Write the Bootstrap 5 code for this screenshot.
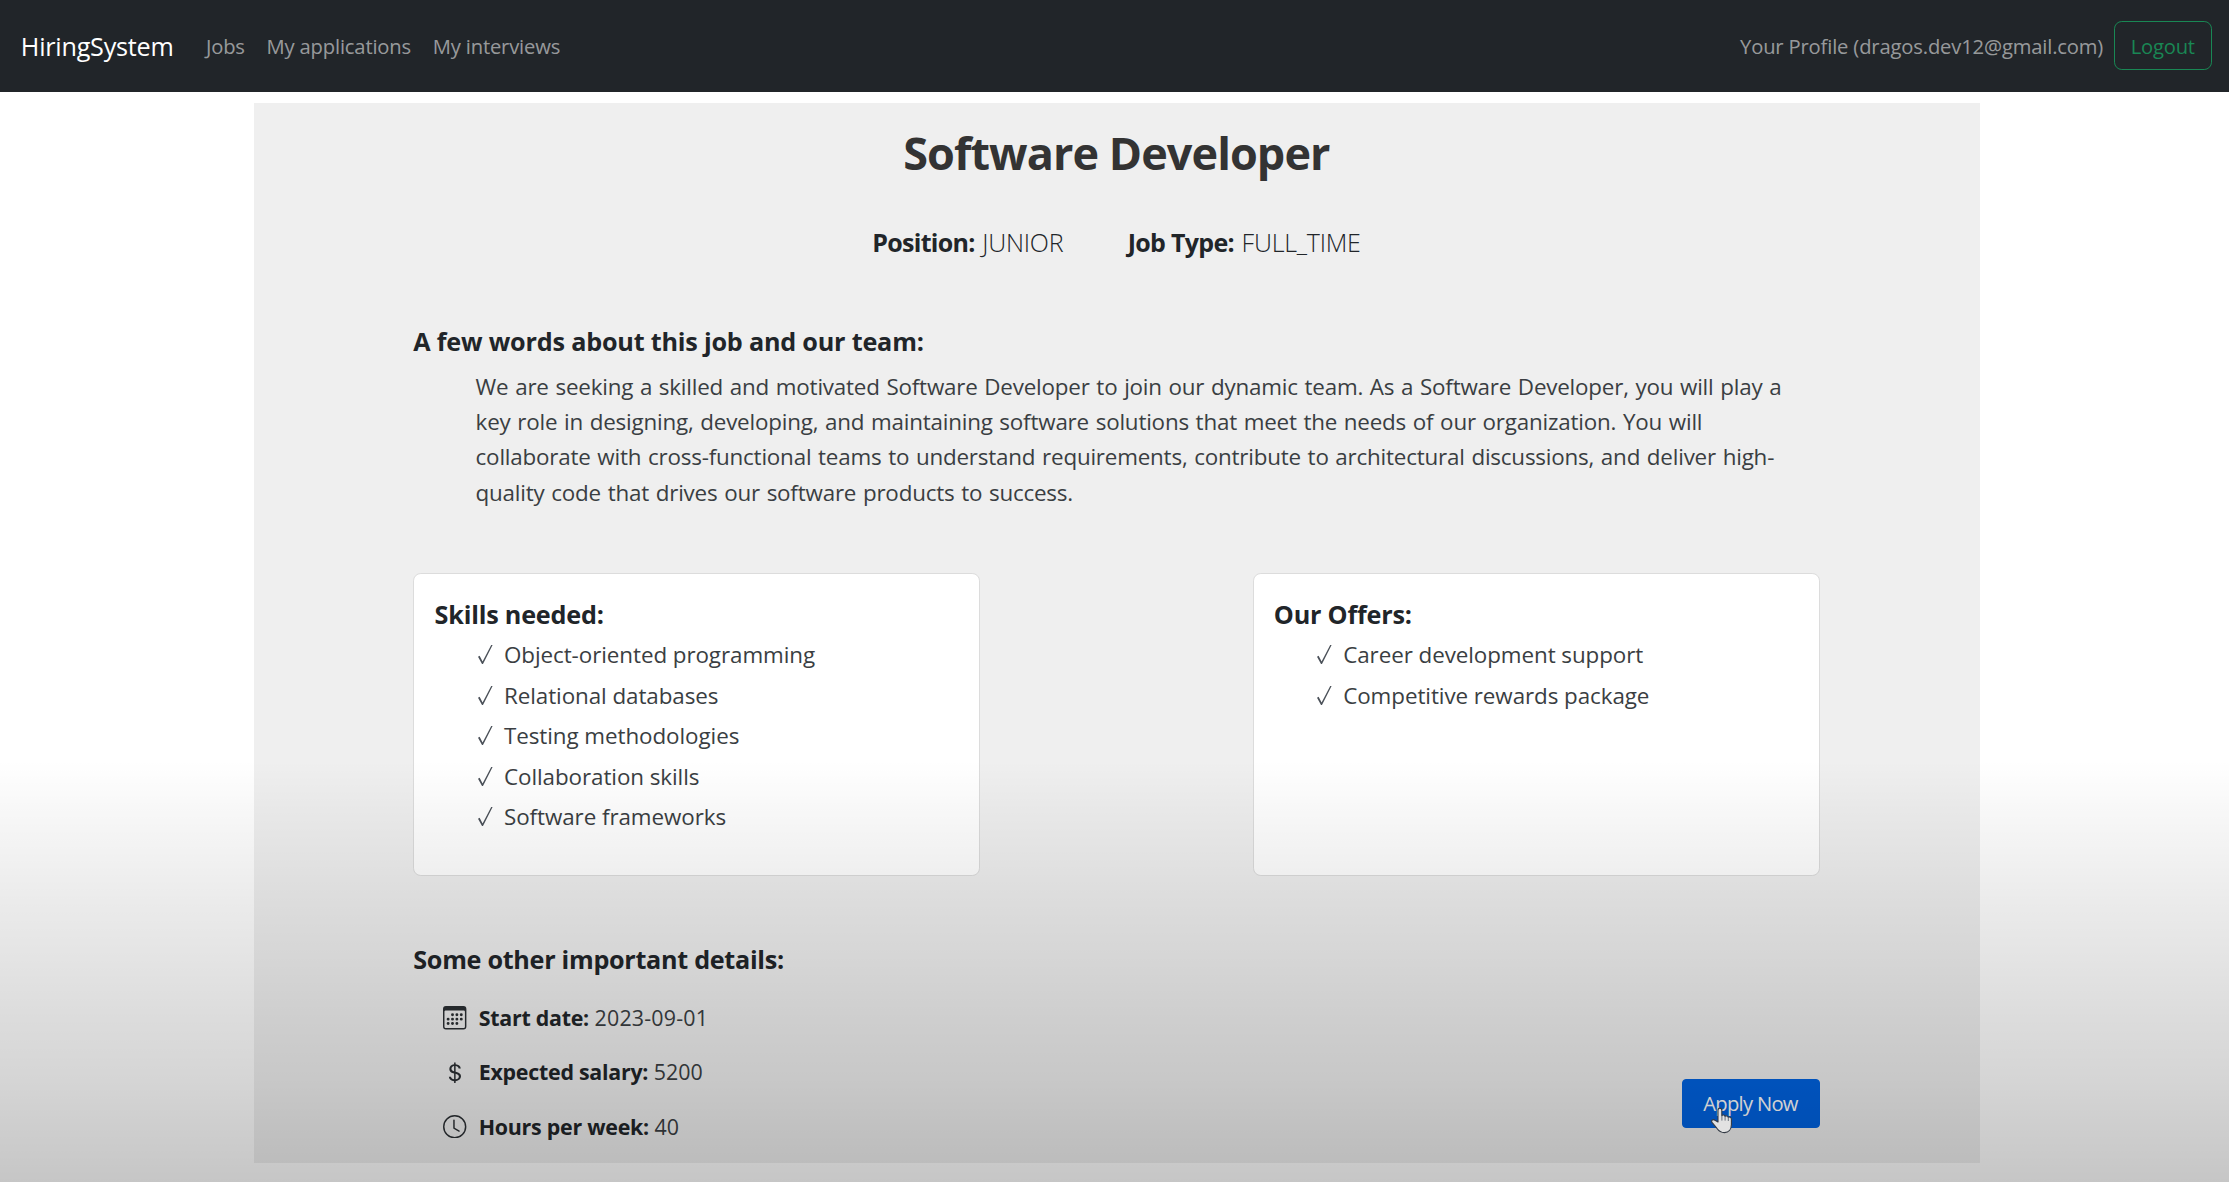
<!DOCTYPE html>
<html lang="en">
<head>
<meta charset="utf-8">
<title>HiringSystem</title>
<link href="https://cdn.jsdelivr.net/npm/bootstrap@5.3.0/dist/css/bootstrap.min.css" rel="stylesheet">
<style>
html{font-size:20.8px}
body{font-family:"Open Sans","Noto Sans",sans-serif;font-size:20.2px;color:#212529;background:#fff;height:1182px;overflow:hidden;position:relative}
.top-bar{height:91.5px;background:#212529}
.top-bar .container-fluid{padding:0 17px 0 20.8px}
.top-bar .navbar-brand{font-size:25.2px;letter-spacing:-.24px;margin-right:22px;padding-top:8px}
.top-bar .nav-link{letter-spacing:-.16px}
.main-links{gap:.9px}
.logout-btn{width:98.5px;height:49.4px;font-size:20.2px;line-height:32.5px;letter-spacing:-.2px;border-radius:7.8px}
.job-panel{width:1726px;margin:11px auto 0 254px;height:1060px;background:#efefef;padding:22px 160.5px 0 159.3px}
.job-title{font-size:45px;font-weight:700;color:#333;line-height:56px;letter-spacing:-.94px}
.job-meta{font-size:25px;gap:64.5px;line-height:38px;margin-top:42.5px;font-weight:300;letter-spacing:-.25px}
.job-meta b{font-weight:700;letter-spacing:-.7px;margin-right:1.4px}
.sect-title{font-size:25.2px;font-weight:700;line-height:31px;margin:0;letter-spacing:-.2px}
.about-title{margin-top:64.7px}
.about-text{font-size:22.4px;line-height:35.3px;padding-left:62.3px;margin:12px 0 0;color:#3a3e42;white-space:nowrap;letter-spacing:-.2px;word-spacing:1.1px}
.card-row{margin-top:63.4px}
.info-card{width:567px;height:302.5px;border:1px solid #dcdcdc;border-radius:7.8px}
.info-card .card-body{padding:24.3px 20.3px}
.tick-list{font-size:22.4px;line-height:40.6px;color:#3a3e42;padding-left:42px;margin:5.4px 0 0;letter-spacing:-.07px}
.tick{width:16px;height:21px;margin-right:11.4px;vertical-align:-2px}
.detail-title{margin-top:68.5px;letter-spacing:-.3px}
.detail-list{margin-top:15.7px}
.detail-row{font-size:21.4px;height:54.3px;color:#3a3e42;padding-left:30px}
.detail-row b{color:#212529;font-weight:700;letter-spacing:-.25px}
.detail-row svg{width:23.4px;height:23.4px;margin-right:12px;fill:#2b2f33}
.date-value{letter-spacing:.2px}
.apply-btn{width:138px;height:49px;border-radius:4px;background:#0062e0;border-color:#0062e0;font-size:20.2px;letter-spacing:-.7px;margin-bottom:26px}
.shade{position:absolute;inset:auto 0 0 0;height:422px;pointer-events:none;background:linear-gradient(rgba(0,0,0,0),rgba(0,0,0,.03) 12.5%,rgba(0,0,0,.047) 19.7%,rgba(0,0,0,.075) 31.3%,rgba(0,0,0,.106) 46.7%,rgba(0,0,0,.137) 61%,rgba(0,0,0,.165) 75.8%,rgba(0,0,0,.196) 88.4%,rgba(0,0,0,.224))}
.hand-cursor{position:absolute;left:1710px;top:1106px;width:24px;height:28px}
</style>
</head>
<body>
<nav class="navbar navbar-expand navbar-dark top-bar p-0">
 <div class="container-fluid">
  <a class="navbar-brand" href="#">HiringSystem</a>
  <div class="navbar-nav main-links me-auto">
   <a class="nav-link" href="#">Jobs</a>
   <a class="nav-link" href="#">My applications</a>
   <a class="nav-link" href="#">My interviews</a>
  </div>
  <div class="navbar-nav align-items-center">
   <a class="nav-link" href="#">Your Profile (dragos.dev12@gmail.com)</a>
   <a class="btn btn-outline-success logout-btn" href="#">Logout</a>
  </div>
 </div>
</nav>
<main class="job-panel">
 <h1 class="job-title text-center m-0">Software Developer</h1>
 <div class="job-meta d-flex justify-content-center">
  <div><b>Position:</b> JUNIOR</div>
  <div><b>Job Type:</b> FULL_TIME</div>
 </div>
 <h2 class="sect-title about-title">A few words about this job and our team:</h2>
 <p class="about-text">We are seeking a skilled and motivated Software Developer to join our dynamic team. As a Software Developer, you will play a<br>
key role in designing, developing, and maintaining software solutions that meet the needs of our organization. You will<br>
collaborate with cross-functional teams to understand requirements, contribute to architectural discussions, and deliver high-<br>
quality code that drives our software products to success.</p>
 <div class="card-row d-flex justify-content-between">
  <div class="card info-card"><div class="card-body">
   <h2 class="sect-title">Skills needed:</h2>
   <ul class="tick-list list-unstyled">
    <li><svg class="tick" viewBox="0 0 16 21"><use href="#tick"/></svg>Object-oriented programming</li>
    <li><svg class="tick" viewBox="0 0 16 21"><use href="#tick"/></svg>Relational databases</li>
    <li><svg class="tick" viewBox="0 0 16 21"><use href="#tick"/></svg>Testing methodologies</li>
    <li><svg class="tick" viewBox="0 0 16 21"><use href="#tick"/></svg>Collaboration skills</li>
    <li><svg class="tick" viewBox="0 0 16 21"><use href="#tick"/></svg>Software frameworks</li>
   </ul></div></div>
  <div class="card info-card"><div class="card-body">
   <h2 class="sect-title">Our Offers:</h2>
   <ul class="tick-list list-unstyled">
    <li><svg class="tick" viewBox="0 0 16 21"><use href="#tick"/></svg>Career development support</li>
    <li><svg class="tick" viewBox="0 0 16 21"><use href="#tick"/></svg>Competitive rewards package</li>
   </ul></div></div>
 </div>
 <h2 class="sect-title detail-title">Some other important details:</h2>
 <div class="detail-list d-flex justify-content-between align-items-end">
  <div>
   <div class="detail-row d-flex align-items-center"><svg viewBox="0 0 16 16"><path d="M14 0H2a2 2 0 0 0-2 2v12a2 2 0 0 0 2 2h12a2 2 0 0 0 2-2V2a2 2 0 0 0-2-2zM1 3.857C1 3.384 1.448 3 2 3h12c.552 0 1 .384 1 .857v10.286c0 .473-.448.857-1 .857H2c-.552 0-1-.384-1-.857V3.857z"/><path d="M6.5 7a1 1 0 1 0 0-2 1 1 0 0 0 0 2zm3 0a1 1 0 1 0 0-2 1 1 0 0 0 0 2zm3 0a1 1 0 1 0 0-2 1 1 0 0 0 0 2zm-9 3a1 1 0 1 0 0-2 1 1 0 0 0 0 2zm3 0a1 1 0 1 0 0-2 1 1 0 0 0 0 2zm3 0a1 1 0 1 0 0-2 1 1 0 0 0 0 2zm3 0a1 1 0 1 0 0-2 1 1 0 0 0 0 2zm-9 3a1 1 0 1 0 0-2 1 1 0 0 0 0 2zm3 0a1 1 0 1 0 0-2 1 1 0 0 0 0 2zm3 0a1 1 0 1 0 0-2 1 1 0 0 0 0 2z"/></svg><div><b>Start date:</b> <span class="date-value">2023-09-01</span></div></div>
   <div class="detail-row d-flex align-items-center"><svg viewBox="0 0 16 16"><path d="M4 10.781c.148 1.667 1.513 2.85 3.591 3.003V15h1.043v-1.216c2.27-.179 3.678-1.438 3.678-3.3 0-1.59-.947-2.51-2.956-3.028l-.722-.187V3.467c1.122.11 1.879.714 2.07 1.616h1.47c-.166-1.6-1.54-2.748-3.54-2.875V1H7.591v1.233c-1.939.23-3.27 1.472-3.27 3.156 0 1.454.966 2.483 2.661 2.917l.61.162v4.031c-1.149-.17-1.94-.8-2.131-1.718H4zm3.391-3.836c-1.043-.263-1.6-.825-1.6-1.616 0-.944.704-1.641 1.8-1.828v3.495l-.2-.05zm1.591 1.872c1.287.323 1.852.859 1.852 1.769 0 1.097-.826 1.828-2.2 1.939V8.73l.348.086z"/></svg><div><b>Expected salary:</b> 5200</div></div>
   <div class="detail-row d-flex align-items-center"><svg viewBox="0 0 16 16"><path d="M8 3.5a.5.5 0 0 0-1 0V9a.5.5 0 0 0 .252.434l3.5 2a.5.5 0 0 0 .496-.868L8 8.71V3.5z"/><path d="M8 16A8 8 0 1 0 8 0a8 8 0 0 0 0 16zm7-8A7 7 0 1 1 1 8a7 7 0 0 1 14 0z"/></svg><div><b>Hours per week:</b> 40</div></div>
  </div>
  <button class="btn btn-primary apply-btn p-0">Apply Now</button>
 </div>
</main>
<div class="shade"></div>
<svg class="hand-cursor" viewBox="0 0 24 28"><path d="M8 16V4.2C8 1.4 11.8 1.4 11.8 4.2V9.6C12.4 8.6 14.8 8.8 15 10.4C15.8 9.4 18 9.8 18.2 11.4C19.2 10.6 21.4 11.2 21.4 13.2V18.5C21.4 23.5 18.5 26.6 14.5 26.6C10.5 26.6 8.6 24.8 6.8 22.2L2 16.4C.6 14.4 3.2 12.8 5 14.2Z" fill="#e2e2e2" stroke="#333a44" stroke-width="1.1" stroke-linejoin="round"/><path d="M11.9 9.6V14.6M15.1 10.4V14.6M18.3 11.4V15" fill="none" stroke="#5a6470" stroke-width=".9"/></svg>
<svg width="0" height="0" class="position-absolute"><defs><path id="tick" d="M1 12.8L2.6 11.8L5.6 17.5L14.2 1L15.6 1L6 20L5 20Z" fill="#4a5058"/></defs></svg>
<script src="https://cdn.jsdelivr.net/npm/bootstrap@5.3.0/dist/js/bootstrap.bundle.min.js"></script>
</body>
</html>
